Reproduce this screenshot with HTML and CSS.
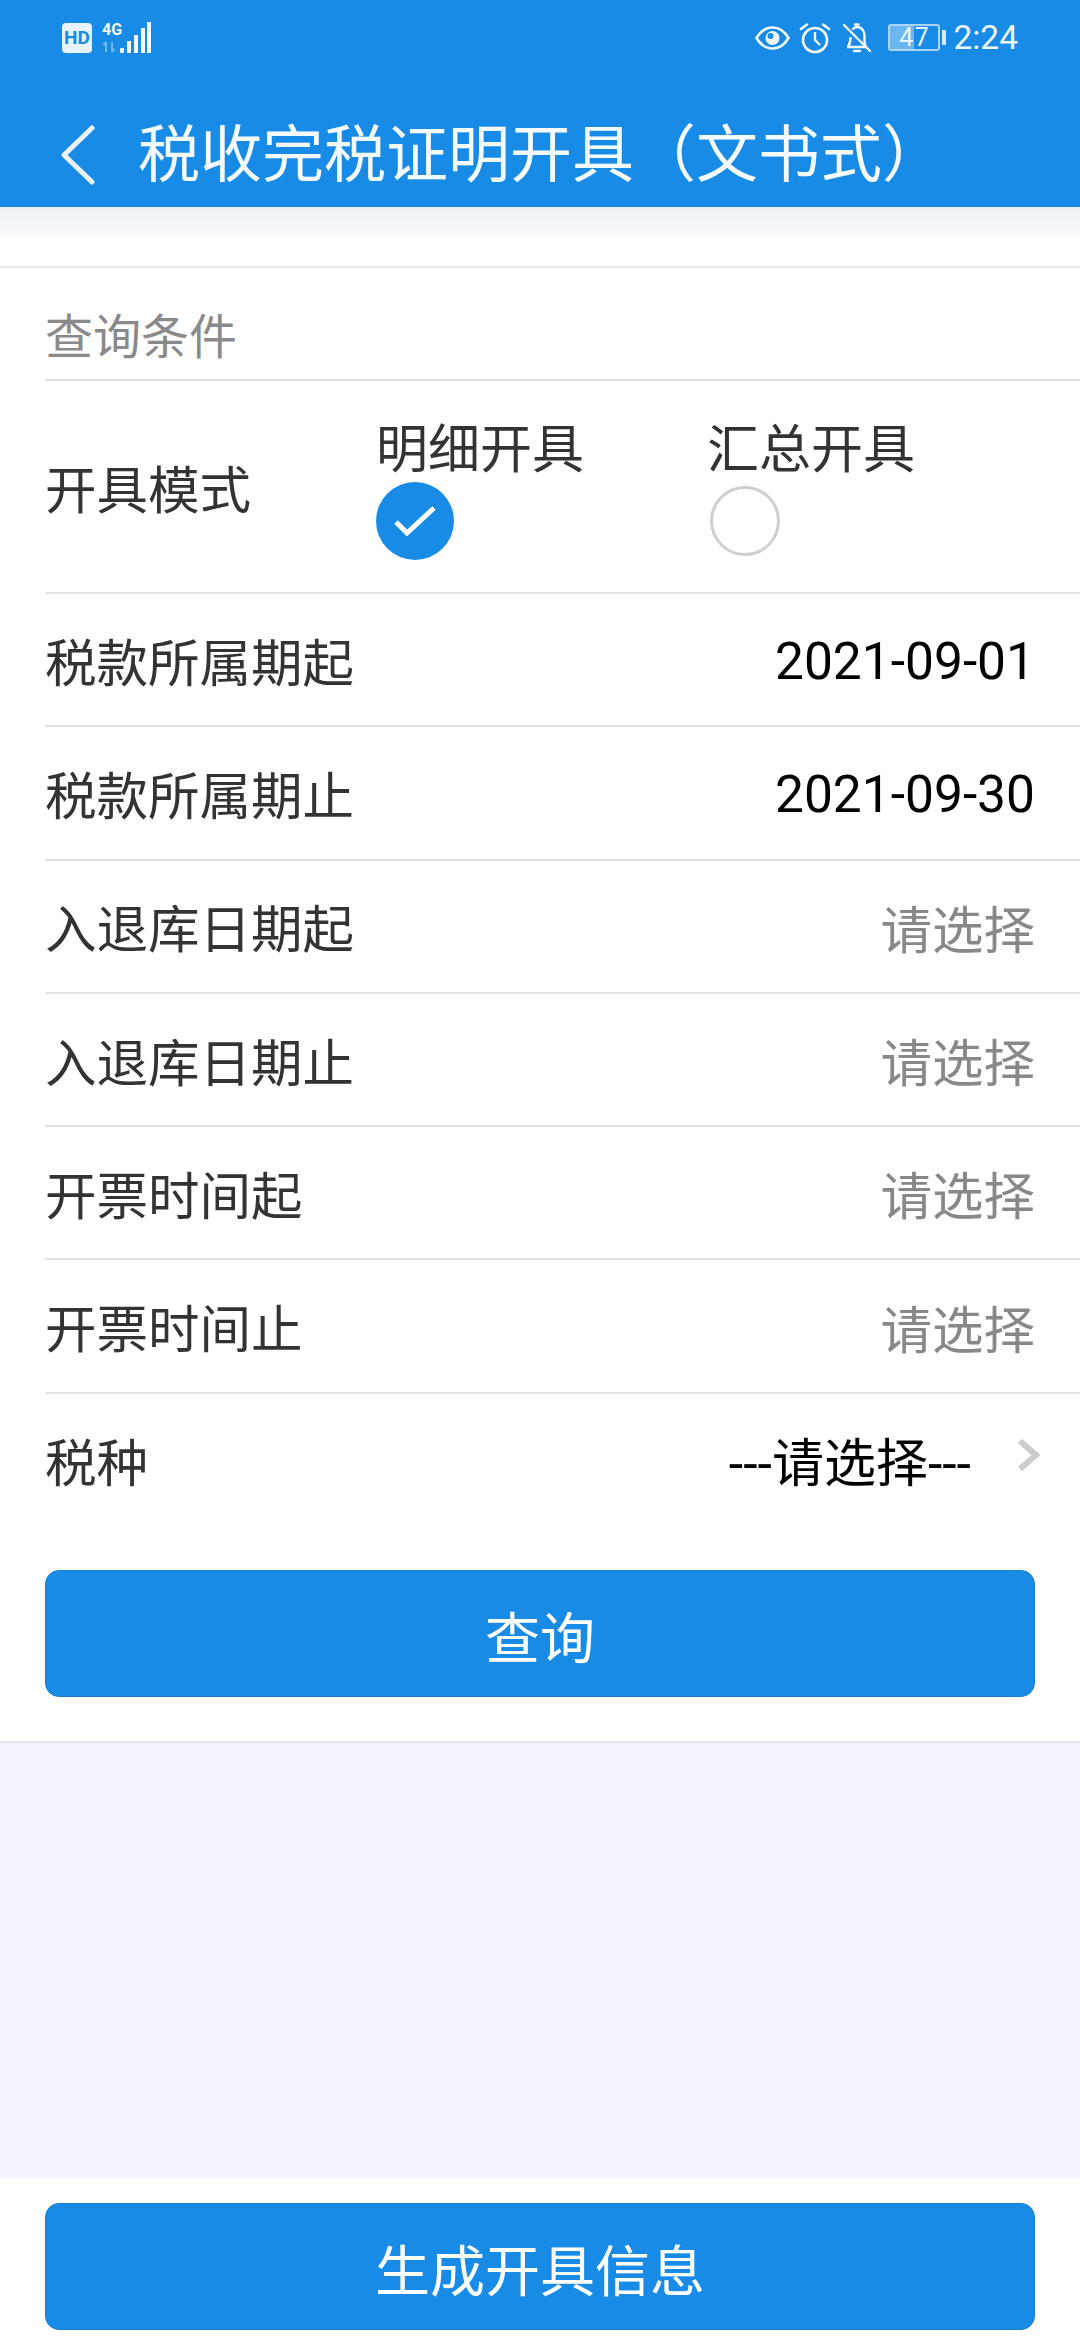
FILE: index.html
```html
<!DOCTYPE html>
<html lang="zh-CN">
<head>
    <meta charset="UTF-8">
    <title>税收完税证明开具（文书式）</title>
    <link rel="stylesheet" href="styles.css">
</head>
<body>
    <div class="page">
        <header class="header">
            <div class="status">
                <div class="status-left">
                    <span class="hd">HD</span>
                    <div class="net">
                        <span class="net-label">4G</span>
                        <svg class="arrows" width="14" height="12" viewBox="0 0 14 12">
                            <path d="M4 11V1M1.500 4L4 1M10 1V11M12.500 8L10 11" fill="none" stroke="#6db9f3" stroke-width="2"/>
                        </svg>
                    </div>
                    <svg class="signal" width="32" height="32" viewBox="0 0 32 32">
                        <rect x="0" y="26" width="4" height="5" rx="1" fill="#f2f8fe"/>
                        <rect x="7" y="19" width="4" height="12" fill="#f2f8fe"/>
                        <rect x="14" y="13" width="4" height="18" fill="#f2f8fe"/>
                        <rect x="21" y="6" width="4" height="25" fill="#f2f8fe"/>
                        <rect x="27" y="0" width="4" height="31" fill="#f2f8fe"/>
                    </svg>
                </div>
                <div class="status-right">
                    <!--눈 보호 모드-->
                    <svg class="eye" width="35" height="28" viewBox="0 0 35 28">
                        <path d="M1.500 14C6 6.500 11 3.500 17.500 3.500S29 6.500 33.500 14C29 21.500 24 24.500 17.500 24.500S6 21.500 1.500 14Z" fill="none" stroke="#f2f8fe" stroke-width="2.600"/>
                        <circle cx="17.500" cy="14" r="7" fill="#f2f8fe"/>
                        <circle cx="15.500" cy="12" r="3" fill="#178be6"/>
                    </svg>
                    <svg class="alarm" width="32" height="32" viewBox="0 0 32 32">
                        <circle cx="16" cy="18" r="12" fill="none" stroke="#f2f8fe" stroke-width="2.600"/>
                        <path d="M16 10V18L21 23" fill="none" stroke="#f2f8fe" stroke-width="2.400"/>
                        <path d="M2 7L8 2.500M30 7L24 2.500" fill="none" stroke="#f2f8fe" stroke-width="2.600" stroke-linecap="round"/>
                    </svg>
                    <svg class="bell" width="30" height="32" viewBox="0 0 30 32">
                        <path d="M5 25H24M6 25C8 22 8.500 20 8.500 15M10.500 7.500C12 5.500 13.500 5 15 5C20 5 22.500 9.500 22.500 14V19C22.500 21 23 23 24 25" fill="none" stroke="#f2f8fe" stroke-width="2.400" stroke-linejoin="round"/>
                        <path d="M13 2.500H16.500M12 29H18" fill="none" stroke="#f2f8fe" stroke-width="2.400" stroke-linecap="round"/>
                        <path d="M2 3L28 29" fill="none" stroke="#f2f8fe" stroke-width="2.400" stroke-linecap="round"/>
                    </svg>
                    <div class="battery">
                        <span class="battery-box"><span class="battery-num">47</span></span>
                        <span class="battery-nub"></span>
                    </div>
                    <span class="clock">2:24</span>
                </div>
            </div>
            <div class="titlebar">
                <svg class="back" width="36" height="60" viewBox="0 0 36 60">
                    <path d="M32 3L4 30L32 57" fill="none" stroke="#e9f1fb" stroke-width="5" stroke-linecap="round" stroke-linejoin="round"/>
                </svg>
                <h1 class="title">税收完税证明开具（文书式）</h1>
            </div>
        </header>

        <div class="shade"></div>

        <section class="query">
            <div class="query-head"><span>查询条件</span></div>
            <div class="rows">
                <div class="row mode-row">
                    <span class="label">开具模式</span>
                    <div class="options">
                        <div class="option">
                            <span class="option-text">明细开具</span>
                            <span class="radio-wrap">
                                <span class="radio checked">
                                    <svg width="42" height="30" viewBox="0 0 42 30">
                                        <path d="M2 16L13 27L40 2" fill="none" stroke="#fff" stroke-width="5"/>
                                    </svg>
                                </span>
                            </span>
                        </div>
                        <div class="option">
                            <span class="option-text">汇总开具</span>
                            <span class="radio-wrap"><span class="radio"></span></span>
                        </div>
                    </div>
                </div>
                <div class="row"><span class="label">税款所属期起</span><span class="date">2021-09-01</span></div>
                <div class="row"><span class="label">税款所属期止</span><span class="date">2021-09-30</span></div>
                <div class="row"><span class="label">入退库日期起</span><span class="hint">请选择</span></div>
                <div class="row"><span class="label">入退库日期止</span><span class="hint">请选择</span></div>
                <div class="row"><span class="label">开票时间起</span><span class="hint">请选择</span></div>
                <div class="row"><span class="label">开票时间止</span><span class="hint">请选择</span></div>
                <div class="row">
                    <span class="label">税种</span>
                    <div class="picker">
                        <span class="picker-text">---请选择---</span>
                        <svg width="24" height="34" viewBox="0 0 24 34">
                            <path d="M3 3L19 17L3 31" fill="none" stroke="#cccccc" stroke-width="6"/>
                        </svg>
                    </div>
                </div>
            </div>
            <div class="query-btn-box">
                <button class="btn">查询</button>
            </div>
        </section>

        <div class="spacer"></div>

        <footer class="footer">
            <button class="btn">生成开具信息</button>
        </footer>
    </div>
</body>
</html>
```

FILE: styles.css
```css
*{
    box-sizing: border-box;
    margin: 0;
    padding: 0;
}
html, body{
    height: 100%;
}
body{
    font-family: "Noto Sans CJK SC", "Noto Sans", sans-serif;
    background-color: #f4f4fc;
    color: #333;
}
.page{
    height: 2340px;
    display: flex;
    flex-direction: column;
}
.header{
    height: 207px;
    background-color: #178be6;
    color: #fff;
}
.status{
    height: 75px;
    padding: 0 62px 0 62px;
    display: flex;
    justify-content: space-between;
    align-items: center;
}
.status-left{
    display: flex;
    align-items: center;
}
.hd{
    width: 30px;
    height: 30px;
    border-radius: 4px;
    background-color: #e6f3fd;
    color: #178be6;
    font: bold 19px "Roboto", sans-serif;
    display: flex;
    justify-content: center;
    align-items: center;
}
.net{
    width: 18px;
    margin-left: 10px;
    display: flex;
    flex-direction: column;
    align-items: flex-start;
}
.net-label{
    height: 16px;
    font: bold 16px/16px "Roboto", sans-serif;
    color: #f2f8fe;
}
.arrows{
    margin-top: 3px;
}
.status-right{
    display: flex;
    align-items: center;
}
.alarm{
    margin-left: 9px;
}
.bell{
    margin-left: 11px;
}
.battery{
    margin-left: 16px;
    display: flex;
    align-items: center;
}
.battery-box{
    width: 52px;
    height: 27px;
    border: 2px solid #a9d5f7;
    border-radius: 3px;
    background: linear-gradient(to right, #6cb5ef 50%, #178be6 50%);
    display: flex;
    justify-content: center;
    align-items: center;
}
.battery-num{
    font: 25px/1 "Roboto", sans-serif;
    color: #eaf5fe;
    letter-spacing: 1px;
}
.battery-nub{
    width: 4px;
    height: 15px;
    margin-left: 2px;
    background-color: #d5eafb;
}
.clock{
    margin-left: 7px;
    font: 33.500px/1 "Roboto", sans-serif;
    color: #eef6fe;
}
.titlebar{
    height: 132px;
    padding: 18px 0 0 60px;
    display: flex;
    align-items: center;
}
.back{
    margin-top: 10px;
}
.title{
    margin-left: 42px;
    font-size: 62px;
    font-weight: 400;
    white-space: nowrap;
    color: #f4fafe;
}
.shade{
    height: 61px;
    background: linear-gradient(to bottom, #eef2f6 0, #f6f8fa 26px, #ffffff 34px);
    border-bottom: 2px solid #e9e9e9;
}
.query{
    background-color: #fff;
    border-bottom: 2px solid #e2e2e2;
}
.query-head{
    height: 111px;
    padding-left: 45px;
    display: flex;
    align-items: center;
    font-size: 48px;
    color: #8a8a8a;
}
.query-head span{
    margin-top: 18px;
}
.rows{
    padding-left: 45px;
}
.row{
    height: 133.300px;
    padding-right: 45px;
    border-top: 2px solid #e2e2e2;
    display: flex;
    justify-content: space-between;
    align-items: center;
    font-size: 51.500px;
}
.mode-row{
    height: 213px;
    padding-right: 0;
    justify-content: flex-start;
}
.label{
    line-height: 1;
    color: #333;
}
.mode-row .label{
    width: 331px;
    flex-shrink: 0;
}
.options{
    display: flex;
}
.option{
    width: 331px;
    display: flex;
    flex-direction: column;
}
.option-text{
    height: 66px;
    line-height: 66px;
    margin-bottom: 3px;
    font-size: 52px;
    color: #333;
}
.radio-wrap{
    height: 78px;
    display: flex;
    align-items: center;
}
.radio{
    width: 70px;
    height: 70px;
    margin-left: 3px;
    border: 3px solid #cfcfcf;
    border-radius: 50%;
}
.radio.checked{
    width: 78px;
    height: 78px;
    margin-left: 0;
    border: none;
    background-color: #178be6;
    display: flex;
    justify-content: center;
    align-items: center;
}
.date{
    margin-top: 4px;
    font-family: "Roboto", sans-serif;
    font-size: 51.500px;
    color: #000;
}
.hint{
    color: #888;
}
.picker{
    margin-right: -6px;
    display: flex;
    align-items: center;
}
.picker-text{
    font-family: "Roboto", "Noto Sans CJK SC", sans-serif;
    font-size: 52px;
    color: #000;
}
.picker svg{
    margin-left: 46px;
    margin-top: -8px;
}
.query-btn-box{
    padding: 45px 45px 44px;
}
.btn{
    width: 100%;
    height: 127px;
    border: 1px solid #1a7ec8;
    border-radius: 14px;
    background-color: #178be6;
    color: #fff;
    font-family: "Noto Sans CJK SC", "Noto Sans", sans-serif;
    font-size: 55px;
    display: block;
}
.spacer{
    flex: 1;
}
.footer{
    height: 162px;
    padding: 25px 45px 0;
    background-color: #fff;
}
```
